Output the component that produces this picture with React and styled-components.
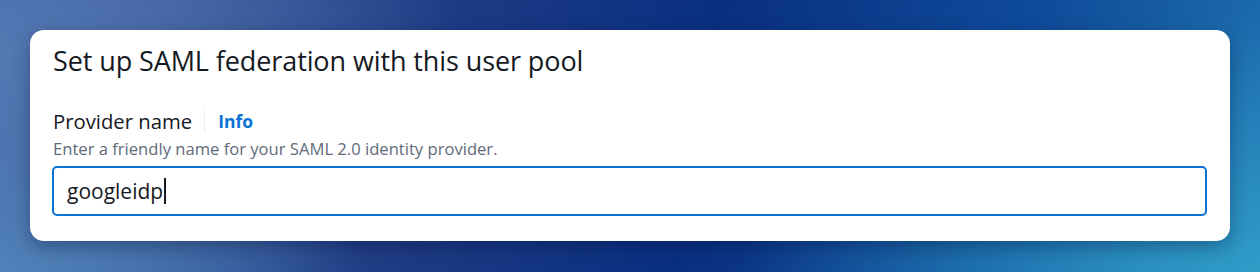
import React from "react";
import styled, { createGlobalStyle } from "styled-components";

const GlobalStyle = createGlobalStyle`
  html, body {
    margin: 0;
    padding: 0;
  }
  body {
    font-family: "Open Sans", "Noto Sans", Arial, sans-serif;
    width: 1260px;
    height: 272px;
    overflow: hidden;
    background:
      radial-gradient(ellipse 520px 260px at 100% 100%, #2f9cc8 0%, rgba(47, 156, 200, 0) 100%),
      radial-gradient(ellipse 460px 300px at 0% 20%, #5479b3 0%, rgba(84, 121, 179, 0) 100%),
      radial-gradient(ellipse 360px 220px at 0% 100%, #4e86bb 0%, rgba(78, 134, 187, 0) 100%),
      linear-gradient(100deg, #3d5c9c 0%, #1d3a84 35%, #0a2f82 55%, #0f4c9a 80%, #1f6fb0 100%);
  }
`;

const Page = styled.main`
  padding: 30px;
`;

const Card = styled.section`
  background: #ffffff;
  border-radius: 14px;
  padding: 14px 23px 25px 22px;
  box-shadow: 0 6px 18px rgba(0, 16, 50, 0.35);
  display: flex;
  flex-direction: column;
`;

const Title = styled.h2`
  margin: 1px 0 0 1px;
  font-size: 27px;
  line-height: 32px;
  font-weight: 400;
  color: #16191f;
  letter-spacing: -0.1px;
`;

const LabelRow = styled.div`
  display: flex;
  align-items: center;
  margin-top: 32px;
  margin-left: 1px;
  height: 24px;
`;

const Label = styled.label`
  font-size: 20.3px;
  line-height: 24px;
  color: #16191f;
`;

const Divider = styled.span`
  width: 1px;
  height: 23px;
  background: #e9ebed;
  margin: 0 13px 0 12px;
`;

const InfoLink = styled.a`
  font-size: 17.5px;
  font-weight: 700;
  color: #0972d3;
  text-decoration: none;
  line-height: 24px;
`;

const Description = styled.p`
  margin: 6px 0 0 1px;
  font-size: 16.6px;
  line-height: 20px;
  color: #5f6b7a;
`;

const Field = styled.div`
  margin-top: 7px;
  height: 50px;
  box-sizing: border-box;
  border: 2px solid #0972d3;
  border-radius: 5px;
  padding: 0 13px;
  display: flex;
  align-items: center;
  font-size: 21px;
  color: #16191f;
`;

const Caret = styled.span`
  display: inline-block;
  width: 1.5px;
  height: 26px;
  background: #16191f;
  margin-left: 1px;
`;

export default function App() {
  return (
    <>
      <GlobalStyle />
      <Page>
        <Card>
          <Title>Set up SAML federation with this user pool</Title>
          <LabelRow>
            <Label>Provider name</Label>
            <Divider />
            <InfoLink href="#">Info</InfoLink>
          </LabelRow>
          <Description>Enter a friendly name for your SAML 2.0 identity provider.</Description>
          <Field role="textbox">
            googleidp
            <Caret />
          </Field>
        </Card>
      </Page>
    </>
  );
}
